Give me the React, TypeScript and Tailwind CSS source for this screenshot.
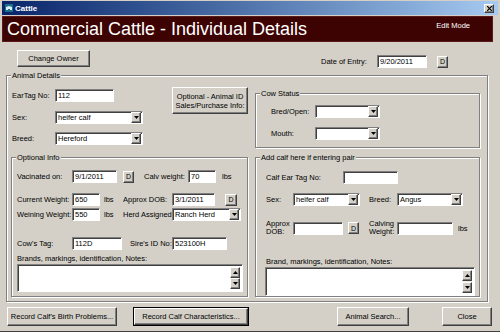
import React from "react";

const raised =
  "bg-[#d4d0c8] border border-t-white border-l-white border-r-[#404040] border-b-[#404040] shadow-[inset_-1px_-1px_0_#808080]";
const sunken =
  "bg-white border border-t-[#808080] border-l-[#808080] border-r-white border-b-white shadow-[inset_1px_1px_0_#404040]";

function Btn({ className = "", children }: { className?: string; children: React.ReactNode }) {
  return (
    <div className={`${raised} flex items-center justify-center text-center leading-[9px] ${className}`}>
      {children}
    </div>
  );
}

function DBtn({ className = "" }: { className?: string }) {
  return <Btn className={`w-[11px] h-[12px] text-[7px] ${className}`}>D</Btn>;
}

function Input({ className = "", value = "" }: { className?: string; value?: string }) {
  return (
    <div className={`${sunken} h-[13px] pl-[2px] flex items-center whitespace-nowrap overflow-hidden ${className}`}>
      {value}
    </div>
  );
}

function Arrow({ up = false }: { up?: boolean }) {
  return (
    <svg width="5" height="3" viewBox="0 0 5 3">
      <path d={up ? "M0 3 L5 3 L2.5 0 Z" : "M0 0 L5 0 L2.5 3 Z"} fill="#000" />
    </svg>
  );
}

function Select({ className = "", value = "" }: { className?: string; value?: string }) {
  return (
    <div className={`${sunken} h-[13px] pl-[2px] flex items-center whitespace-nowrap ${className}`}>
      <span className="flex-1">{value}</span>
      <div className={`${raised} w-[10px] h-[11px] mr-px flex items-center justify-center`}>
        <Arrow />
      </div>
    </div>
  );
}

function Notes({ className = "" }: { className?: string }) {
  return (
    <div className={`${sunken} flex justify-end py-[2px] pr-[2px] ${className}`}>
      <div className="w-[10px] flex flex-col justify-between bg-[#ecebe6]">
        <div className={`${raised} h-[11px] flex items-center justify-center`}>
          <Arrow up />
        </div>
        <div className={`${raised} h-[11px] flex items-center justify-center`}>
          <Arrow />
        </div>
      </div>
    </div>
  );
}

function Group({ title, className = "", children }: { title: string; className?: string; children?: React.ReactNode }) {
  return (
    <div className={`relative border border-[#808080] shadow-[inset_1px_1px_0_#fff,1px_1px_0_#fff] ${className}`}>
      <span className="absolute -top-[5px] left-[4px] bg-[#d4d0c8] px-px leading-[9px] whitespace-nowrap">{title}</span>
      {children}
    </div>
  );
}

export default function App() {
  return (
    <div className="w-[500px] h-[332px] bg-[#d4d0c8] font-['Liberation_Sans',Arial,sans-serif] text-[7.5px] leading-[9px] text-black overflow-hidden flex flex-col border-b border-b-[#404040]">
      {/* title bar */}
      <div className="mx-[2px] mt-px h-[14px] bg-linear-to-r from-[#0a246a] to-[#a6caf0] flex items-center pl-[3px] pr-[4px]">
        <svg width="8" height="8" viewBox="0 0 8 8">
          <rect width="8" height="8" fill="#1c6f8a" />
          <path d="M1 3 L4 2 L7 3 L7 6 L5 6 L5 5 L3 5 L3 6 L1 6 Z" fill="#d8f0f8" />
        </svg>
        <span className="ml-[2px] text-white font-bold text-[8px]">Cattle</span>
        <div className={`${raised} ml-auto w-[10px] h-[9px] flex items-center justify-center`}>
          <svg width="5" height="5" viewBox="0 0 5 5">
            <path d="M0 0 L5 5 M5 0 L0 5" stroke="#000" strokeWidth="1.2" />
          </svg>
        </div>
      </div>

      {/* banner */}
      <div className="ml-[2px] mt-px w-[491px] h-[26px] bg-[#3d0303] border border-[#5a1a1a] flex items-center pl-[4px]">
        <span className="text-white text-[18px] leading-none">Commercial Cattle - Individual Details</span>
        <span className="ml-auto mr-[22px] self-start mt-[4px] text-white">Edit Mode</span>
      </div>

      {/* owner / entry date */}
      <div className="flex items-start h-[25px] mt-[8px]">
        <Btn className="ml-[17px] w-[73px] h-[17px]">Change Owner</Btn>
        <div className="ml-[231px] mt-[5px] flex items-center">
          <span className="w-[56px]">Date of Entry:</span>
          <Input className="w-[50px]" value="9/20/2011" />
          <DBtn className="ml-[10px]" />
        </div>
      </div>

      {/* animal details */}
      <Group title="Animal Details" className="ml-[6px] w-[482px] h-[227px] pl-[4px]">
        <div className="flex h-[72px]">
          <div className="w-[237px] flex">
            <div className="w-[161px] pt-[13px] pl-px flex flex-col">
              <div className="flex items-center">
                <span className="w-[43px]">EarTag No:</span>
                <Input className="w-[59px]" value="112" />
              </div>
              <div className="flex items-center mt-[9px]">
                <span className="w-[43px]">Sex:</span>
                <Select className="w-[88px]" value="heifer calf" />
              </div>
              <div className="flex items-center mt-[8px]">
                <span className="w-[43px]">Breed:</span>
                <Select className="w-[88px]" value="Hereford" />
              </div>
            </div>
            <Btn className="mt-[11px] w-[76px] h-[27px]">
              Optional - Animal ID
              <br />
              Sales/Purchase Info:
            </Btn>
          </div>
          <Group title="Cow Status" className="ml-[7px] mt-[17px] w-[225px] h-[55px] pl-[15px] pt-[11px]">
            <div className="flex items-center">
              <span className="w-[44px]">Bred/Open:</span>
              <Select className="w-[65px]" />
            </div>
            <div className="flex items-center mt-[9px]">
              <span className="w-[44px]">Mouth:</span>
              <Select className="w-[65px]" />
            </div>
          </Group>
        </div>

        <div className="flex mt-[9px]">
          <Group title="Optional Info" className="w-[237px] h-[140px] pl-[5px] pt-[12px]">
            <div className="flex items-center">
              <span className="w-[55px]">Vacinated on:</span>
              <Input className="w-[45px]" value="9/1/2011" />
              <DBtn className="ml-[6px]" />
              <span className="ml-[10px] w-[44px]">Calv weight:</span>
              <Input className="w-[28px]" value="70" />
              <span className="ml-[6px]">lbs</span>
            </div>
            <div className="flex items-center mt-[10px]">
              <span className="w-[55px]">Current Weight:</span>
              <Input className="w-[28px]" value="650" />
              <span className="ml-[4px] w-[19px]">lbs</span>
              <span className="w-[49px]">Approx DOB:</span>
              <Input className="w-[43px]" value="3/1/2011" />
              <DBtn className="ml-[10px] w-[12px]" />
            </div>
            <div className="flex items-center mt-[2px]">
              <span className="w-[55px] whitespace-nowrap">Weining Weight:</span>
              <Input className="w-[28px]" value="550" />
              <span className="ml-[4px] w-[19px]">lbs</span>
              <span className="w-[49px] whitespace-nowrap">Herd Assigned:</span>
              <Select className="w-[69px]" value="Ranch Herd" />
            </div>
            <div className="flex items-center mt-[16px]">
              <span className="w-[55px]">Cow's Tag:</span>
              <Input className="w-[50px]" value="112D" />
              <span className="ml-[8px] w-[42px] whitespace-nowrap">Sire's ID No:</span>
              <Input className="w-[55px]" value="523100H" />
            </div>
            <div className="mt-[4px] h-[9px]">Brands, markings, identification, Notes:</div>
            <Notes className="mt-px w-[226px] h-[28px]" />
          </Group>

          <Group title="Add calf here if entering pair" className="ml-[7px] w-[225px] h-[140px] pl-[10px] pt-[13px]">
            <div className="flex items-center">
              <span className="w-[77px]">Calf Ear Tag No:</span>
              <Input className="w-[55px]" />
            </div>
            <div className="flex items-center mt-[9px]">
              <span className="w-[27px]">Sex:</span>
              <Select className="w-[67px]" value="heifer calf" />
              <span className="ml-[9px] w-[28px]">Breed:</span>
              <Select className="w-[66px]" value="Angus" />
            </div>
            <div className="flex items-center mt-[14px]">
              <span className="w-[27px] leading-[8px]">
                Approx
                <br />
                DOB:
              </span>
              <Input className="w-[50px]" />
              <DBtn className="ml-[5px]" />
              <span className="ml-[10px] w-[28px] leading-[8px]">
                Calving
                <br />
                Weight:
              </span>
              <Input className="w-[56px]" />
              <span className="ml-[5px]">lbs</span>
            </div>
            <div className="mt-[21px] h-[9px]">Brand, markings, identification, Notes:</div>
            <Notes className="-ml-px mt-px w-[210px] h-[29px]" />
          </Group>
        </div>
      </Group>

      {/* bottom buttons */}
      <div className="flex mt-[5px] h-[19px]">
        <Btn className="ml-[7px] w-[110px]">Record Calf's Birth Problems...</Btn>
        <div className="ml-[16px] w-[116px] border border-black flex">
          <Btn className="flex-1">Record Calf Characteristics...</Btn>
        </div>
        <Btn className="ml-[88px] w-[72px]">Animal Search...</Btn>
        <Btn className="ml-[33px] w-[50px]">Close</Btn>
      </div>
    </div>
  );
}
